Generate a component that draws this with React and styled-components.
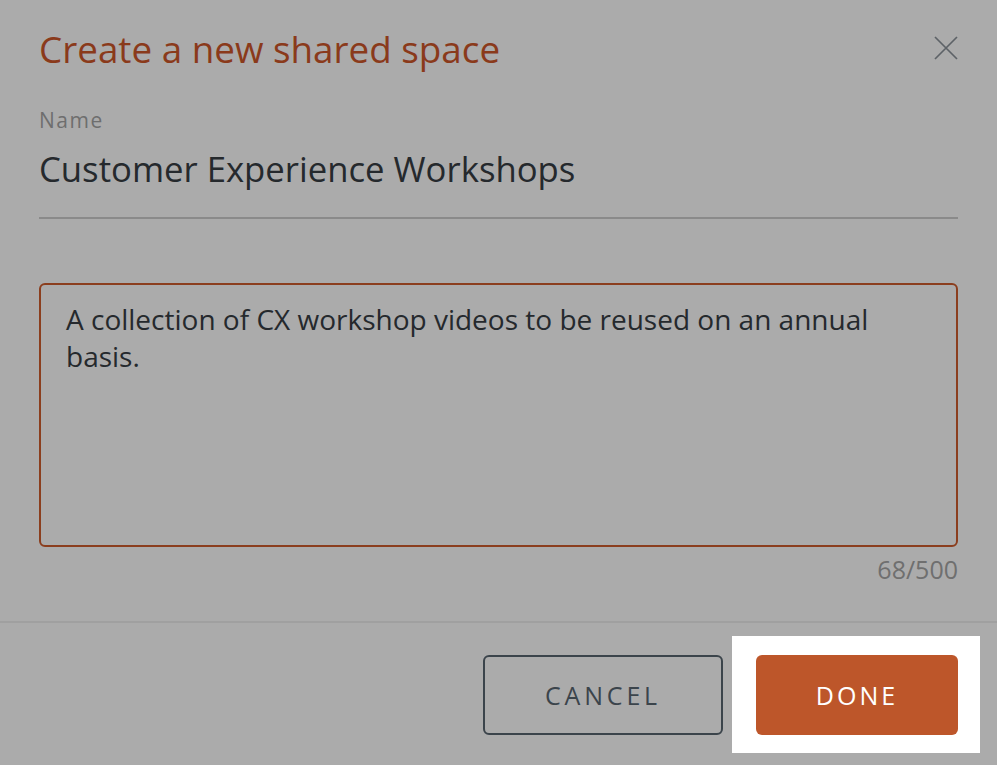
import React from "react";
import styled, { createGlobalStyle } from "styled-components";

const GlobalStyle = createGlobalStyle`
  html, body {
    margin: 0;
    padding: 0;
    background: #ababab;
  }
  * { box-sizing: border-box; }
`;

const FONT = `"Open Sans", "Lato", "Liberation Sans", sans-serif`;

const Dialog = styled.div`
  width: 997px;
  height: 765px;
  background: #ababab;
  display: flex;
  flex-direction: column;
  font-family: ${FONT};
`;

const Header = styled.div`
  display: flex;
  align-items: flex-start;
  justify-content: space-between;
  padding: 25px 39px 0 39px;
`;

const Title = styled.h1`
  margin: 0;
  font-size: 36.8px;
  line-height: 48px;
  font-weight: 400;
  color: #8a3a1b;
`;

const CloseButton = styled.button`
  margin-top: 11px;
  width: 24px;
  height: 24px;
  padding: 0;
  border: 0;
  background: transparent;
  display: flex;
  align-items: center;
  justify-content: center;
  cursor: pointer;
`;

const Body = styled.div`
  padding: 0 39px;
  display: flex;
  flex-direction: column;
`;

const Field = styled.label`
  display: flex;
  flex-direction: column;
  margin-top: 34px;
`;

const Label = styled.span`
  font-size: 21px;
  line-height: 26px;
  letter-spacing: 1.5px;
  color: #6e6e6e;
`;

const NameInput = styled.input`
  margin-top: 14px;
  width: 100%;
  height: 72px;
  border: 0;
  border-bottom: 2px solid #8a8a8a;
  background: transparent;
  padding: 0 0 28px 0;
  font-family: ${FONT};
  font-size: 34.7px;
  color: #25292d;
  outline: none;
`;

const Description = styled.textarea`
  margin-top: 64px;
  width: 100%;
  height: 264px;
  border: 2px solid #8b3e1e;
  border-radius: 6px;
  background: transparent;
  padding: 16px 25px;
  font-family: ${FONT};
  font-size: 28px;
  line-height: 37px;
  color: #25292d;
  resize: none;
  outline: none;
`;

const Counter = styled.div`
  align-self: flex-end;
  margin-top: 7px;
  font-size: 25px;
  line-height: 30px;
  color: #6f6f6f;
`;

const Footer = styled.div`
  margin-top: 37px;
  border-top: 2px solid #a0a0a0;
  display: flex;
  justify-content: flex-end;
  align-items: center;
  padding: 13px 17px 0 0;
  gap: 9px;
`;

const Highlight = styled.div`
  background: #ffffff;
  padding: 19px 22px 18px 24px;
  display: flex;
`;

const Button = styled.button`
  height: 80px;
  border-radius: 6px;
  font-family: ${FONT};
  font-size: 25px;
  letter-spacing: ${(p) => (p.$primary ? "3px" : "3.8px")};
  cursor: pointer;
  display: flex;
  align-items: center;
  justify-content: center;
  border: ${(p) => (p.$primary ? "none" : "2px solid #3b444b")};
  background: ${(p) => (p.$primary ? "#bd562a" : "transparent")};
  color: ${(p) => (p.$primary ? "#ffffff" : "#3b444b")};
  width: ${(p) => p.$width}px;
`;

export default function App() {
  return (
    <>
      <GlobalStyle />
      <Dialog>
        <Header>
          <Title>Create a new shared space</Title>
          <CloseButton aria-label="Close">
            <svg width="24" height="24" viewBox="0 0 24 24">
              <path d="M1 1 L23 23 M23 1 L1 23" stroke="#5d6267" strokeWidth="1.7" fill="none" />
            </svg>
          </CloseButton>
        </Header>
        <Body>
          <Field>
            <Label>Name</Label>
            <NameInput defaultValue="Customer Experience Workshops" />
          </Field>
          <Description
            readOnly
            defaultValue="A collection of CX workshop videos to be reused on an annual basis."
          />
          <Counter>68/500</Counter>
        </Body>
        <Footer>
          <Button $width={240}>CANCEL</Button>
          <Highlight>
            <Button $primary $width={202}>DONE</Button>
          </Highlight>
        </Footer>
      </Dialog>
    </>
  );
}
